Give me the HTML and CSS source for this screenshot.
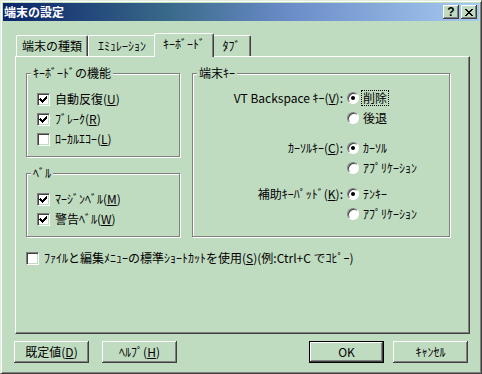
FILE: index.html
```html
<!DOCTYPE html>
<html lang="ja">
<head>
  <meta charset="UTF-8" />
  <title>端末の設定</title>
  <link rel="stylesheet" href="styles.css">
</head>
<body>

  <div class="window">
    <div class="titlebar">
      <span class="title">端末の設定</span>
      <div class="caption-buttons">
        <button class="cap-btn">?</button>
        <button class="cap-btn">
          <svg width="8" height="7" viewBox="0 0 8 7" shape-rendering="crispEdges">
            <path d="M0 0h2v1h1v1h2v-1h1v-1h2v1h-1v1h-1v1h-1v1h1v1h1v1h1v1h-2v-1h-1v-1h-2v1h-1v1h-2v-1h1v-1h1v-1h1v-1h-1v-1h-1v-1h-1z" fill="#000"/>
          </svg>
        </button>
      </div>
    </div>

    <div class="client">
      <div class="tabs">
        <div class="tab tab-type">端末の種類</div>
        <div class="tab tab-emu">ｴﾐｭﾚｰｼｮﾝ</div>
        <div class="tab tab-kbd active">ｷｰﾎﾞｰﾄﾞ</div>
        <div class="tab tab-tab">ﾀﾌﾞ</div>
      </div>

      <div class="panel">
        <div class="columns">
          <div class="left-col">
            <div class="group group-keys">
              <div class="legend">ｷｰﾎﾞｰﾄﾞの機能</div>
              <div class="rows">
                <div class="check-row">
                  <span class="checkbox"><svg width="11" height="11" viewBox="0 0 11 11" shape-rendering="crispEdges"><path d="M2 4h1v1h1v1h1v-1h1v-1h1v-1h1v-1h1v3h-1v1h-1v1h-1v1h-1v1h-1v-1h-1v-1h-1v-1h-1z" fill="#000"/></svg></span>
                  <span>自動反復(<u>U</u>)</span>
                </div>
                <div class="check-row">
                  <span class="checkbox"><svg width="11" height="11" viewBox="0 0 11 11" shape-rendering="crispEdges"><path d="M2 4h1v1h1v1h1v-1h1v-1h1v-1h1v-1h1v3h-1v1h-1v1h-1v1h-1v1h-1v-1h-1v-1h-1v-1h-1z" fill="#000"/></svg></span>
                  <span>ﾌﾞﾚｰｸ(<u>R</u>)</span>
                </div>
                <div class="check-row">
                  <span class="checkbox"></span>
                  <span>ﾛｰｶﾙｴｺｰ(<u>L</u>)</span>
                </div>
              </div>
            </div>

            <div class="group group-bell">
              <div class="legend">ﾍﾞﾙ</div>
              <div class="rows">
                <div class="check-row">
                  <span class="checkbox"><svg width="11" height="11" viewBox="0 0 11 11" shape-rendering="crispEdges"><path d="M2 4h1v1h1v1h1v-1h1v-1h1v-1h1v-1h1v3h-1v1h-1v1h-1v1h-1v1h-1v-1h-1v-1h-1v-1h-1z" fill="#000"/></svg></span>
                  <span>ﾏｰｼﾞﾝﾍﾞﾙ(<u>M</u>)</span>
                </div>
                <div class="check-row">
                  <span class="checkbox"><svg width="11" height="11" viewBox="0 0 11 11" shape-rendering="crispEdges"><path d="M2 4h1v1h1v1h1v-1h1v-1h1v-1h1v-1h1v3h-1v1h-1v1h-1v1h-1v1h-1v-1h-1v-1h-1v-1h-1z" fill="#000"/></svg></span>
                  <span>警告ﾍﾞﾙ(<u>W</u>)</span>
                </div>
              </div>
            </div>
          </div>

          <div class="group group-term">
            <div class="legend">端末ｷｰ</div>
            <div class="term-rows">
              <div class="pair">
                <div class="radio-row">
                  <span class="radio-label">VT Backspace ｷｰ(<u>V</u>):</span>
                  <span class="radio on"><span class="dot"></span></span>
                  <span class="radio-text focus">削除</span>
                </div>
                <div class="radio-row">
                  <span class="radio-label"></span>
                  <span class="radio"></span>
                  <span class="radio-text">後退</span>
                </div>
              </div>
              <div class="pair pair-cursor">
                <div class="radio-row">
                  <span class="radio-label">ｶｰｿﾙｷｰ(<u>C</u>):</span>
                  <span class="radio on"><span class="dot"></span></span>
                  <span class="radio-text">ｶｰｿﾙ</span>
                </div>
                <div class="radio-row">
                  <span class="radio-label"></span>
                  <span class="radio"></span>
                  <span class="radio-text">ｱﾌﾟﾘｹｰｼｮﾝ</span>
                </div>
              </div>
              <div class="pair pair-keypad">
                <div class="radio-row">
                  <span class="radio-label">補助ｷｰﾊﾟｯﾄﾞ(<u>K</u>):</span>
                  <span class="radio on"><span class="dot"></span></span>
                  <span class="radio-text">ﾃﾝｷｰ</span>
                </div>
                <div class="radio-row">
                  <span class="radio-label"></span>
                  <span class="radio"></span>
                  <span class="radio-text">ｱﾌﾟﾘｹｰｼｮﾝ</span>
                </div>
              </div>
            </div>
          </div>
        </div>

        <div class="check-row shortcut-row">
          <span class="checkbox"></span>
          <span>ﾌｧｲﾙと編集ﾒﾆｭｰの標準ｼｮｰﾄｶｯﾄを使用(<u>S</u>)(例:Ctrl+C でｺﾋﾟｰ)</span>
        </div>
      </div>

      <div class="actions">
        <button class="btn">既定値(<u>D</u>)</button>
        <button class="btn btn-help">ﾍﾙﾌﾟ(<u>H</u>)</button>
        <button class="btn btn-ok">OK</button>
        <button class="btn btn-cancel">ｷｬﾝｾﾙ</button>
      </div>
    </div>
  </div>

</body>
</html>
```

FILE: styles.css
```css
* {
  box-sizing: border-box;
}

body {
  margin: 0;
  font-family: "Noto Sans CJK JP", sans-serif;
  font-size: 12px;
  color: #000;
  background: #c0dcc0;
}

.window {
  width: 482px;
  height: 374px;
  background: #c0dcc0;
  border: 1px solid;
  border-color: #dfeedf #404040 #404040 #dfeedf;
  box-shadow: inset 1px 1px #fff, inset -1px -1px #808080;
  padding: 2px;
}

.titlebar {
  height: 18px;
  display: flex;
  align-items: center;
  justify-content: space-between;
  padding: 0 2px 0 1px;
  background: linear-gradient(to right, #0a246a 0%, #3a6a8a 35%, #6a8cc8 60%, #a6caf0 100%);
}

.title {
  color: #fff;
  font-weight: bold;
  line-height: 14px;
}

.caption-buttons {
  display: flex;
  gap: 2px;
}

.cap-btn {
  width: 16px;
  height: 14px;
  padding: 0;
  border: none;
  background: #c0dcc0;
  box-shadow: inset -1px -1px #404040, inset 1px 1px #fff, inset -2px -2px #808080;
  display: flex;
  align-items: center;
  justify-content: center;
  font: bold 12px "Liberation Sans", sans-serif;
  line-height: 12px;
  color: #000;
}

.client {
  padding: 12px 9px 0 12px;
}

/* tabs */
.tabs {
  display: flex;
  align-items: flex-end;
  height: 23px;
  padding-left: 1px;
}

.tab {
  height: 21px;
  border: 1px solid;
  border-bottom: none;
  border-color: #fff #404040 #fff #fff;
  border-radius: 2px 2px 0 0;
  box-shadow: inset -1px 0 #808080;
  display: flex;
  align-items: center;
  justify-content: center;
  padding-bottom: 1px;
  white-space: nowrap;
}

.tab-type { width: 72px; }
.tab-emu { width: 68px; }
.tab-kbd { width: 56px; }
.tab-tab { width: 39px; }

.tab.active {
  width: 60px;
  height: 24px;
  margin: 0 -2px -1px;
  padding-bottom: 4px;
  position: relative;
  z-index: 1;
  background: #c0dcc0;
}

/* panel */
.panel {
  width: 455px;
  height: 278px;
  border: 1px solid;
  border-color: #fff #404040 #404040 #fff;
  box-shadow: inset -1px -1px #808080;
  padding: 16px 0 0 10px;
}

.columns {
  display: flex;
  align-items: flex-start;
  gap: 12px;
}

.left-col {
  width: 154px;
  display: flex;
  flex-direction: column;
  gap: 16px;
}

.group {
  border: 1px solid #808080;
  box-shadow: inset 1px 1px #fff, 1px 1px #fff;
}

.group-keys { height: 84px; }
.group-bell { height: 64px; }
.group-term {
  width: 258px;
  height: 164px;
}

.legend {
  width: fit-content;
  height: 12px;
  line-height: 12px;
  margin: -7px 0 0 4px;
  padding: 0 2px;
  background: #c0dcc0;
  white-space: nowrap;
}

.rows {
  margin-top: 10px;
  padding-left: 10px;
}

.check-row {
  display: flex;
  align-items: center;
  gap: 5px;
  height: 20px;
  line-height: 14px;
  white-space: nowrap;
}

.checkbox {
  flex: none;
  width: 13px;
  height: 13px;
  border: 1px solid;
  border-color: #808080 #fff #fff #808080;
  box-shadow: inset 1px 1px #404040, inset -1px -1px #c0dcc0;
  background: #fff;
  display: flex;
}

.shortcut-row {
  margin-top: 11px;
}

/* radio area */
.term-rows {
  margin-top: 9px;
}

.pair-cursor { margin-top: 10px; }
.pair-keypad { margin-top: 6px; }

.radio-row {
  display: flex;
  align-items: center;
  height: 20px;
  line-height: 14px;
  white-space: nowrap;
}

.radio-label {
  width: 150px;
  text-align: right;
}

.radio {
  flex: none;
  width: 12px;
  height: 12px;
  margin-left: 4px;
  border-radius: 50%;
  border: 1px solid;
  border-color: #808080 #fff #fff #808080;
  box-shadow: inset 1px 1px #404040;
  background: #fff;
  display: flex;
  align-items: center;
  justify-content: center;
}

.dot {
  width: 4px;
  height: 4px;
  border-radius: 50%;
  background: #000;
}

.radio-text {
  margin-left: 2px;
  padding: 0 1px;
  border: 1px dotted transparent;
}

.radio-text.focus {
  border-color: #000;
}

/* bottom buttons */
.actions {
  display: flex;
  margin: 7px 0 0 -1px;
  padding-right: 2px;
}

.btn {
  width: 75px;
  height: 22px;
  padding: 0;
  border: none;
  background: #c0dcc0;
  box-shadow: inset -1px -1px #404040, inset 1px 1px #fff, inset -2px -2px #808080;
  font: inherit;
  line-height: 14px;
  color: #000;
}

.btn-help {
  margin-left: 13px;
}

.btn-ok {
  margin-left: auto;
  border: 1px solid #000;
}

.btn-cancel {
  margin-left: 9px;
}
```
